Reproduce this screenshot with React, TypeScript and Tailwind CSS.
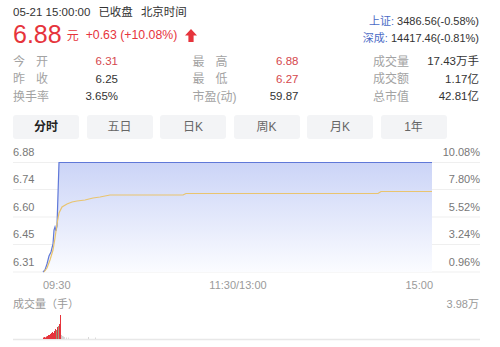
import React from "react"

const red = "#e6343c"

const stats = [
  [
    { label: ["今", "开"], value: "6.31", red: true },
    { label: ["最", "高"], value: "6.88", red: true },
    { label: ["成交量"], value: "17.43万手" },
  ],
  [
    { label: ["昨", "收"], value: "6.25" },
    { label: ["最", "低"], value: "6.27", red: true },
    { label: ["成交额"], value: "1.17亿" },
  ],
  [
    { label: ["换手率"], value: "3.65%" },
    { label: ["市盈(动)"], value: "59.87" },
    { label: ["总市值"], value: "42.81亿" },
  ],
]

const tabs = ["分时", "五日", "日K", "周K", "月K", "1年"]

const leftAxis = ["6.88", "6.74", "6.60", "6.45", "6.31"]
const rightAxis = ["10.08%", "7.80%", "5.52%", "3.24%", "0.96%"]
const grid = [160.5, 187.5, 215, 242.5, 270]

const pricePts =
  "43,270 45,268 47,262 49,254 51,250 53,242 54,228 55,225 56,229 57,224 59,160.5 432,160.5"
const avgPts =
  "44,270 47,266 50,258 53,248 55,236 57,222 59,211 62,205 67,202 72,200 77,199 85,198 93,196 100,195 110,193 183,193 186,191.5 378,191.5 381,189.5 432,189.5"

// 成交量柱子：x, 高度, 颜色
const volBars: [number, number, string][] = [
  [43, 1.5, red], [44, 2, red], [45, 1.5, red], [46, 2.5, red], [47, 3, red],
  [48, 4, red], [49, 4, red], [50, 5, red], [51, 6, red], [52, 7, red],
  [53, 6, red], [54, 8, red], [55, 10, red], [56, 9, "#9a8f6a"], [57, 12, red],
  [58, 13, "#a09a80"], [59, 15, red], [60, 24, red], [61, 4, "#cfcfcf"],
  [62, 3, "#d6d6d6"], [63, 2.5, "#d6d6d6"], [64, 2, "#dcdcdc"], [66, 1.5, "#dcdcdc"],
  [68, 1.5, "#e0e0e0"], [88, 2, "#d8d8d8"], [95, 1.5, "#dcdcdc"],
]

function UpArrow() {
  return (
    <svg width="12" height="13" viewBox="0 0 12 13">
      <path d="M6 0 L12 6.5 H8.6 V13 H3.4 V6.5 H0 Z" fill={red} />
    </svg>
  )
}

export default function App() {
  return (
    <div className="w-[500px] h-[347px] overflow-hidden bg-white font-['Liberation_Sans','Noto_Sans_CJK_SC',sans-serif] text-[#333]">
      {/* 头部 */}
      <div className="flex justify-between pl-[13px] pr-[21px]">
        <div>
          <div className="h-[26px] flex items-center gap-[8px] text-[11.5px]">
            <span>05-21 15:00:00</span>
            <span>已收盘</span>
            <span>北京时间</span>
          </div>
          <div className="h-[22px] mt-[-3px] flex items-center">
            <span className="text-[25px] leading-none text-[#e6343c]">6.88</span>
            <span className="text-[12px] text-[#e6343c] ml-[5px] mt-[4px]">元</span>
            <span className="text-[12.3px] text-[#e6343c] ml-[7px] mt-[3px]">+0.63 (+10.08%)</span>
            <span className="ml-[8px] mt-[2px]">
              <UpArrow />
            </span>
          </div>
        </div>
        <div className="pt-[13px] flex flex-col items-end text-[11px] leading-[17px]">
          <div>
            <span className="text-[#4b6bc6]">上证:</span> 3486.56(-0.58%)
          </div>
          <div>
            <span className="text-[#4b6bc6]">深成:</span> 14417.46(-0.81%)
          </div>
        </div>
      </div>

      {/* 行情数据 */}
      <div className="mt-[6px] pl-[13px] pr-[21px]">
        {stats.map((row, i) => (
          <div key={i} className="grid grid-cols-[105px_106px_106px] justify-between">
            {row.map((s) => (
              <div key={s.value} className="h-[17.5px] flex items-center justify-between">
                {s.label.length === 2 ? (
                  <span className="w-[35px] flex justify-between text-[12px] text-[#a3a3a3]">
                    <span>{s.label[0]}</span>
                    <span>{s.label[1]}</span>
                  </span>
                ) : (
                  <span className="text-[12px] text-[#a3a3a3]">{s.label[0]}</span>
                )}
                <span className={s.red ? "text-[11.5px] text-[#d5474d]" : "text-[11.5px] text-[#333]"}>
                  {s.value}
                </span>
              </div>
            ))}
          </div>
        ))}
      </div>

      {/* 切换标签 */}
      <div className="mt-[9.5px] pl-[13px] flex gap-[7.5px]">
        {tabs.map((t, i) => (
          <div
            key={t}
            className={
              i === 0
                ? "w-[66px] h-[24px] rounded-[3px] bg-[#f3f4f6] flex items-center justify-center text-[12px] font-bold text-[#222]"
                : "w-[66px] h-[24px] rounded-[3px] bg-[#f3f4f6] flex items-center justify-center text-[12px] text-[#666]"
            }
          >
            {t}
          </div>
        ))}
      </div>

      {/* 分时图 */}
      <svg width="500" height="153" viewBox="0 137 500 153" className="block">
        <defs>
          <linearGradient id="fillBlue" x1="0" y1="0" x2="0" y2="1">
            <stop offset="0" stopColor="#cbd4f7" />
            <stop offset="1" stopColor="#fbfcff" />
          </linearGradient>
        </defs>
        {grid.map((y) => (
          <line key={y} x1="13" x2="480" y1={y} y2={y} stroke="#efefef" strokeWidth="1" />
        ))}
        <polygon points={`${pricePts} 432,270 43,270`} fill="url(#fillBlue)" />
        <polyline points={pricePts} fill="none" stroke="#5f78d8" strokeWidth="1.2" />
        <polyline points={avgPts} fill="none" stroke="#e9c46f" strokeWidth="1.2" />
        {leftAxis.map((v, i) => (
          <text key={v} x="13" y={grid[i] - 6.5} fontSize="11" fill="#777">
            {v}
          </text>
        ))}
        {rightAxis.map((v, i) => (
          <text key={v} x="480" y={grid[i] - 6.5} fontSize="11" fill="#777" textAnchor="end">
            {v}
          </text>
        ))}
        <text x="43" y="287" fontSize="11" fill="#9a9a9a">09:30</text>
        <text x="238" y="287" fontSize="11" fill="#9a9a9a" textAnchor="middle">11:30/13:00</text>
        <text x="433" y="287" fontSize="11" fill="#9a9a9a" textAnchor="end">15:00</text>
      </svg>

      {/* 成交量 */}
      <svg width="500" height="57" viewBox="0 290 500 57" className="block">
        <text x="13" y="306" fontSize="11" fill="#999">成交量（手）</text>
        <text x="479" y="306" fontSize="11" fill="#999" textAnchor="end">3.98万</text>
        <line x1="13" x2="480" y1="337.5" y2="337.5" stroke="#e8e8e8" strokeWidth="1.5" />
        {volBars.map(([x, h, c]) => (
          <rect key={x} x={x} y={337 - h} width="1" height={h} fill={c} />
        ))}
      </svg>
    </div>
  )
}
